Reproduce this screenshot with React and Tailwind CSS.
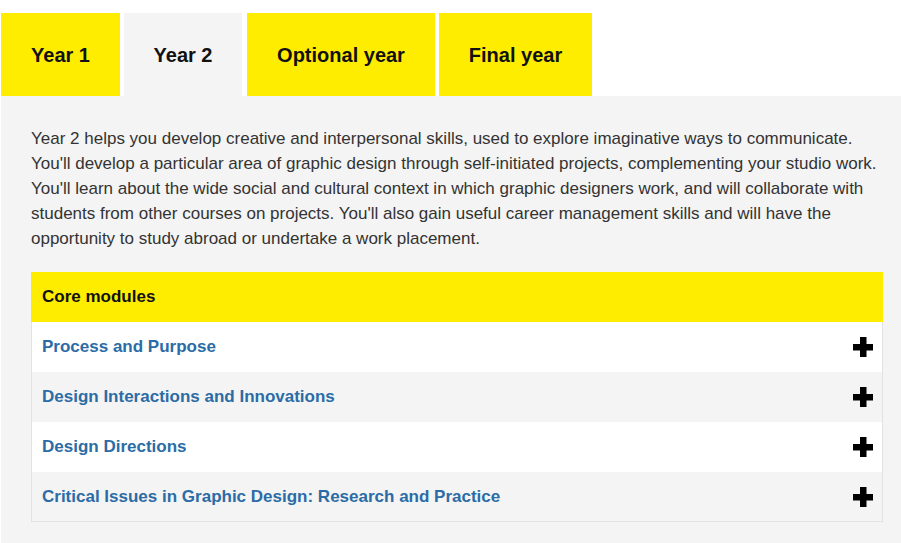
const tabs = [
    { label: "Year 1", active: false, width: "w-[119px] mr-[4px]" },
    { label: "Year 2", active: true, width: "w-[118px] mr-[5px]" },
    { label: "Optional year", active: false, width: "w-[188px] mr-[4px]" },
    { label: "Final year", active: false, width: "w-[153px]" },
];

const modules = [
    "Process and Purpose",
    "Design Interactions and Innovations",
    "Design Directions",
    "Critical Issues in Graphic Design: Research and Practice",
];

const PlusIcon = () => (
    <svg width="20" height="20" viewBox="0 0 20 20" aria-hidden="true">
        <rect x="7" y="0" width="6.5" height="20" fill="#000" />
        <rect x="0" y="7" width="20" height="6.5" fill="#000" />
    </svg>
);

const App = () => {
    return (
        <div
            className="min-h-[543px] bg-white pt-[13px] pl-[1px] overflow-hidden"
            style={{ fontFamily: '"Liberation Sans", Arial, sans-serif' }}
        >
            {/* tab strip */}
            <div className="flex">
                {tabs.map((tab) => (
                    <div
                        key={tab.label}
                        className={`h-[83px] pt-[1px] flex items-center justify-center text-[20px] font-bold text-[#111] ${tab.width} ${
                            tab.active ? "bg-[#f4f4f4]" : "bg-[#ffed00]"
                        }`}
                    >
                        {tab.label}
                    </div>
                ))}
            </div>

            {/* panel */}
            <div className="bg-[#f4f4f4] pl-[30px] pr-[18px] pt-[30px] pb-[30px]">
                <p className="text-[17px] leading-[25px] text-[#333]">
                    Year 2 helps you develop creative and interpersonal skills, used to explore imaginative ways to communicate.
                    You'll develop a particular area of graphic design through self-initiated projects, complementing your studio work.
                    You'll learn about the wide social and cultural context in which graphic designers work, and will collaborate with
                    students from other courses on projects. You'll also gain useful career management skills and will have the
                    opportunity to study abroad or undertake a work placement.
                </p>

                <div className="mt-[21px] w-[852px]">
                    <div className="h-[50px] flex items-center px-[11px] bg-[#ffed00] text-[17px] font-bold text-[#111]">
                        Core modules
                    </div>
                    <div className="border border-t-0 border-[#e2e2e2]">
                        {modules.map((name, i) => (
                            <div
                                key={name}
                                className={`flex items-center justify-between pl-[10px] pr-[9px] ${
                                    i % 2 === 0 ? "bg-white" : "bg-[#f4f4f4]"
                                } ${i === modules.length - 1 ? "h-[49px]" : "h-[50px]"}`}
                            >
                                <span className="text-[17px] font-bold text-[#2b6ca6]">{name}</span>
                                <PlusIcon />
                            </div>
                        ))}
                    </div>
                </div>
            </div>
        </div>
    );
};

export default App;
